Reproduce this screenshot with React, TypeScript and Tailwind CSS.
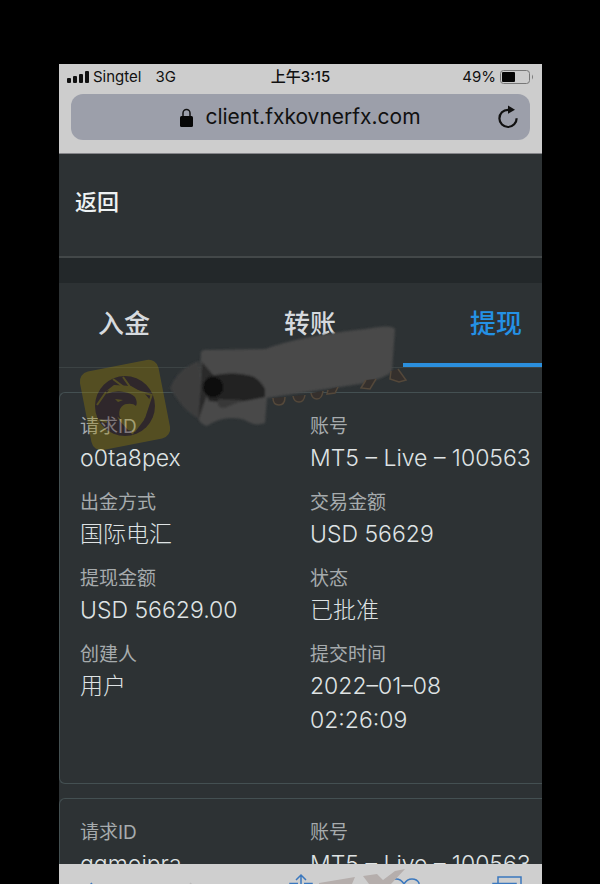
import React from "react";

interface Field {
  label: string;
  value: string;
}

interface RequestCardProps {
  fields: Field[];
}

const requests: Field[][] = [
  [
    { label: "请求ID", value: "o0ta8pex" },
    { label: "账号", value: "MT5 – Live – 100563" },
    { label: "出金方式", value: "国际电汇" },
    { label: "交易金额", value: "USD 56629" },
    { label: "提现金额", value: "USD 56629.00" },
    { label: "状态", value: "已批准" },
    { label: "创建人", value: "用户" },
    { label: "提交时间", value: "2022–01–08 02:26:09" },
  ],
  [
    { label: "请求ID", value: "qgmoipra" },
    { label: "账号", value: "MT5 – Live – 100563" },
  ],
];

const tabs = [
  { id: "deposit", label: "入金" },
  { id: "transfer", label: "转账" },
  { id: "withdraw", label: "提现" },
];

const StatusBar: React.FC = () => (
  <div className="grid h-[26px] grid-cols-3 items-center px-2 text-[15px]">
    <div className="flex items-center gap-1 whitespace-nowrap">
      <svg className="h-3 w-[22px] shrink-0" viewBox="0 0 22 12" fill="#111">
        <rect x="0" y="7" width="4" height="5" rx="1" />
        <rect x="6" y="5" width="4" height="7" rx="1" />
        <rect x="12" y="3" width="4" height="9" rx="1" />
        <rect x="18" y="0" width="4" height="12" rx="1" />
      </svg>
      <span>Singtel</span>
      <span className="ml-2.5">3G</span>
    </div>
    <div className="text-center font-medium">上午3:15</div>
    <div className="flex items-center justify-end gap-1">
      <span>49%</span>
      <svg className="h-[14px] w-[34px] shrink-0" viewBox="0 0 34 14">
        <rect x="0.5" y="0.5" width="29" height="13" rx="3" fill="none" stroke="#777" />
        <rect x="2" y="2" width="13" height="10" rx="1" fill="#050505" />
        <path d="M32 4.5q2 2.5 0 5z" fill="#777" />
      </svg>
    </div>
  </div>
);

const AddressBar: React.FC = () => (
  <div className="mx-3 mt-1 flex h-[46px] items-center rounded-xl bg-[#9c9faa] px-3">
    <div className="flex flex-1 items-center justify-center gap-3 pl-5 text-[21px]">
      <svg className="h-[19px] w-[13px] shrink-0" viewBox="0 0 13 19">
        <path d="M3 9V5a3.5 3.5 0 0 1 7 0v4" fill="none" stroke="#111" strokeWidth="1.5" />
        <rect x="0" y="8" width="13" height="11" rx="1.5" fill="#070707" />
      </svg>
      <span>client.fxkovnerfx.com</span>
    </div>
    <button type="button" aria-label="Reload">
      <svg className="h-6 w-5" viewBox="0 0 20 24" fill="none">
        <path d="M12 4.8h-2A8.6 8.6 0 1 0 18.6 13.2" stroke="#111" strokeWidth="2.2" />
        <path d="M10 0.5l7 4.3-7 4z" fill="#111" />
      </svg>
    </button>
  </div>
);

const RequestCard: React.FC<RequestCardProps> = ({ fields }) => (
  <dl className="grid shrink-0 grid-cols-[230px_1fr] gap-y-[14px] rounded-l-md border border-r-0 border-[#445052] pt-5 pb-[46px] pl-5">
    {fields.map((field) => (
      <div key={field.label}>
        <dt className="text-[19px] leading-7 text-[#a6abad]">{field.label}</dt>
        <dd className="text-[23px] leading-[34px] font-light text-[#dfe3e4]">
          {field.label === "提交时间" ? (
            <span className="block w-40">{field.value}</span>
          ) : (
            <span className="whitespace-nowrap">{field.value}</span>
          )}
        </dd>
      </div>
    ))}
  </dl>
);

const Watermark: React.FC = () => (
  <svg
    className="pointer-events-none absolute top-[165px] left-[10px] h-[140px] w-[350px]"
    viewBox="69 318 350 140"
  >
    <defs>
      <filter id="smudge">
        <feGaussianBlur stdDeviation="1" />
      </filter>
    </defs>
    {/* Eagle badge */}
    <g opacity="0.34">
      <rect x="85" y="364" width="80" height="80" rx="10" transform="rotate(-11 125 404)" fill="#a08602" />
      <circle cx="125" cy="405" r="30" fill="#34141a" />
      {/* Aperture opening */}
      <path d="M105 391l9-7 17 1 14 8 5 6-6 20-9 12-7-2-9-10z" fill="#a08602" />
      {/* Head, beak and neck feathers */}
      <path
        d="M96 401q3-10 13-12l-3 4q10-4 18-2 7 1 11 5 3 6 1 9-3-3-9-2-4 0-7 5-2 6 1 10l-5-3q2 9 12 17-11 2-20-4-14-9-12-27z"
        fill="#34141a"
      />
      <path d="M115 398l8 1-5 2z" fill="#a08602" />
      <path
        d="M113 378l12 9M123 376l10 14M133 389l19 5M152 393l-8 24M143 412l-11 21M97 404l9-13M99 419l8 2"
        fill="none"
        stroke="#a08602"
        strokeWidth="2"
      />
    </g>
    {/* Brushed-out name */}
    <g filter="url(#smudge)">
      <path d="M170 387q8-20 29-27l6 60q-19-5-35-33z" fill="#3c3d3e" />
      <path
        d="M201 351q2-3 8-2l56-1q35-13 100-20 27-5 30 0l-3 42q-5 7-32 13l-93 14-2 25q-10 4-20-3-20-6-38 6-7-2-9-8z"
        fill="#484848"
      />
      <path d="M202 361l12 14-12 33-4 12z" fill="#2b2b2b" />
      <path d="M206 376q28-7 48 0 9 6 11 13v7l-32 6-24-2-3-7z" fill="#212121" />
      <path d="M218 398l26 1-20 8q-8 0-6-9z" fill="#393939" />
      <circle cx="213" cy="386" r="10" fill="#080808" />
    </g>
    <g fill="#35302d" stroke="#54483a" strokeWidth="1.5">
      <path d="M273 397q0 7 6 7t6-8M293 395q1 6 6 6t6-7M311 392q1 6 6 6t6-8M328 389l-1 4 8-1 3-6M366 379l-5 8 9 1 6-10M391 370l-1 8 9 3 7-2-8-11" />
    </g>
  </svg>
);

const BottomToolbar: React.FC = () => (
  <div className="relative flex h-5 shrink-0 items-start justify-between overflow-hidden bg-[#cfcfcf] px-[18px] pt-2">
    <svg
      className="pointer-events-none absolute top-0 left-[250px] h-5 w-[100px]"
      viewBox="0 0 100 20"
      fill="#b5aeac"
    >
      <path d="M10 19l36-6-3 7H10zM54 12l14-2 6 6 12-9 10-2-14 15H60z" />
    </svg>
    <button type="button" aria-label="Back" className="w-8">
      <svg className="h-6 w-8" viewBox="0 0 32 24" fill="none" stroke="#3b78be" strokeWidth="1.5">
        <path d="M15 11L6 20l9 9" />
      </svg>
    </button>
    <button type="button" aria-label="Forward" className="w-8">
      <svg className="h-6 w-8" viewBox="0 0 32 24" fill="none" stroke="#bbb" strokeWidth="1.5">
        <path d="M9 11l9 9-9 9" />
      </svg>
    </button>
    <button type="button" aria-label="Share" className="w-8">
      <svg className="h-6 w-8" viewBox="0 0 32 24" fill="none" stroke="#3b78be" strokeWidth="1.5">
        <path d="M16 20V3M11 8l5-5 5 5M13 11.5H5V26h22V11.5h-8" />
      </svg>
    </button>
    <button type="button" aria-label="Bookmarks" className="w-8">
      <svg className="h-6 w-8" viewBox="0 0 32 24" fill="none" stroke="#3b78be" strokeWidth="1.5">
        <path d="M1 24V11q2-4 7-4t8 5q3-5 8-5t7 4v13M16 11v13" />
      </svg>
    </button>
    <button type="button" aria-label="Pages" className="w-8">
      <svg className="h-6 w-8" viewBox="0 0 32 24" fill="none" stroke="#3b78be" strokeWidth="1.5">
        <path d="M6 11V5h23v15h-5M1 26V11.5h23V26" />
      </svg>
    </button>
  </div>
);

const App: React.FC = () => {
  const activeTab = "withdraw";

  return (
    <div className="flex h-screen flex-col bg-black pt-16 pr-[58px] pl-[59px] font-['Inter','Noto_Sans_CJK_SC',sans-serif] text-[#111]">
      <header className="h-[90px] shrink-0 border-b border-[#858589] bg-[#cdcdcd]">
        <StatusBar />
        <AddressBar />
      </header>

      <main className="relative flex min-h-0 flex-1 flex-col overflow-hidden bg-[#2d3234]">
        <nav className="flex h-[104px] shrink-0 items-center border-b-2 border-[#434849] px-4 pb-1.5">
          <a href="#back" className="text-[22px] font-medium text-[#eef2f3]">
            返回
          </a>
        </nav>
        <div className="h-[25px] shrink-0 bg-[#23282a]" />

        <div role="tablist" className="-ml-7 flex h-[85px] shrink-0 border-b border-[#3c4344]">
          {tabs.map((tab) => (
            <button
              key={tab.id}
              type="button"
              role="tab"
              aria-selected={tab.id === activeTab}
              className={`w-[186px] shrink-0 border-b-4 text-[26px] font-medium ${
                tab.id === activeTab
                  ? "border-[#2b8fdd] text-[#2491e5]"
                  : "border-transparent text-[#d6dade]"
              }`}
            >
              {tab.label}
            </button>
          ))}
        </div>

        <div className="mt-6 flex flex-col gap-[14px]">
          {requests.map((fields, index) => (
            <RequestCard key={index} fields={fields} />
          ))}
        </div>

        <Watermark />
      </main>

      <BottomToolbar />
    </div>
  );
};

export default App;
